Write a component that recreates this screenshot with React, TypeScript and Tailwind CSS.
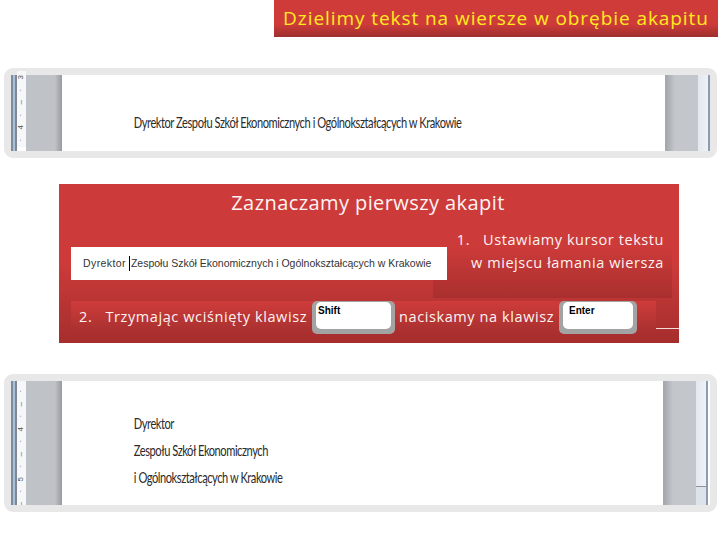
import type { ReactNode } from 'react';

const sans = "font-['Open_Sans',sans-serif]";
const doc = "font-['Lato',sans-serif] text-[#2b2b2b] origin-left scale-x-[0.74] whitespace-nowrap";

const RulerMarks = ({ marks, className }: { marks: string[]; className: string }) => (
  <div className={`flex h-full w-[9px] flex-col items-center overflow-hidden bg-[#f6f7f9] font-['Liberation_Sans',sans-serif] text-[8px] text-[#555] ${className}`}>
    {marks.map((m, i) => (
      <span key={i} className="flex h-[12.5px] shrink-0 -rotate-90 items-center leading-none">{m}</span>
    ))}
  </div>
);

const WordPanel = ({
  marks,
  className,
  rulerClass,
  trailing,
  scrollEnd,
  children,
}: {
  marks: string[];
  className: string;
  rulerClass: string;
  trailing: string;
  scrollEnd?: boolean;
  children: ReactNode;
}) => (
  <div className={`ml-1 flex w-[713px] rounded-[9px] border-[7px] border-[#e8e8e8] ${className}`}>
    <div className="flex w-[6px] shrink-0">
      <div className="w-[2px] bg-[#7f8c9c]" />
      <div className="w-[2px] bg-[#a9c0da]" />
      <div className="w-[2px] bg-[#7e8793]" />
    </div>
    <RulerMarks marks={marks} className={rulerClass} />
    <div className="w-[36px] shrink-0 bg-gradient-to-r from-[#bfc3c8] from-80% to-[#979ba1]" />
    <div className="min-w-0 flex-1 overflow-hidden bg-white">{children}</div>
    <div className="w-[33px] shrink-0 bg-gradient-to-r from-[#a6aaaf] from-5% via-[#c3c6ca] via-30% to-[#c3c6ca]" />
    <div className="flex w-[10px] shrink-0 flex-col bg-gradient-to-r from-[#e4e8ef] to-[#eef1f6]">
      {scrollEnd && <div className="mt-auto h-[19px] border-t border-[#8d939c] bg-[#dde3ea]" />}
    </div>
    <div className="w-[2px] shrink-0 bg-[#8d9bb0]" />
    <div className={`shrink-0 bg-white ${trailing}`} />
  </div>
);

const Key = ({ label, className, labelClass }: { label: string; className: string; labelClass: string }) => (
  <div className={`flex h-[33px] shrink-0 rounded-[5px] bg-[#a3a3a3] px-[4px] pb-[5px] pt-px ${className}`}>
    <div className={`flex-1 rounded-[5px] bg-white pt-[3px] font-['Liberation_Sans',sans-serif] text-[10px] font-bold leading-[12px] text-black ${labelClass}`}>
      {label}
    </div>
  </div>
);

const App = () => {
  return (
    <div className="flex h-[540px] w-[720px] flex-col overflow-hidden bg-white">
      <div className="ml-[274px] h-[37px] w-[444px] bg-gradient-to-b from-[#cf3b39] from-65% to-[#9c2f2e] text-center">
        <span className={`${sans} whitespace-nowrap text-[19px] leading-[37px] tracking-[0.93px] text-[#ffeb1e]`}>
          Dzielimy tekst na wiersze w obrębie akapitu
        </span>
      </div>

      <WordPanel
        marks={['3', '·', '–', '·', '4', '·']}
        rulerClass="-mt-[4px] h-[80px]"
        trailing="w-0"
        className="mt-[31px] h-[90px]"
      >
        <div className={`${doc} pl-[97px] pt-[36px] text-[15px] leading-[22px] tracking-[-0.6px]`}>
          Dyrektor Zespołu Szkół Ekonomicznych i Ogólnokształcących w Krakowie
        </div>
      </WordPanel>

      <div className="relative ml-[59px] mt-[26px] h-[159px] w-[620px] bg-gradient-to-b from-[#cc3b3a] from-50% to-[#a52e2d]">
        <div className={`${sans} pr-[2px] pt-[6px] text-center text-[20px] leading-[26px] tracking-[0.42px] text-[#fdf3f2]`}>
          Zaznaczamy pierwszy akapit
        </div>
        <div className="ml-[12px] mt-[31px] flex">
          <div className="relative z-10 flex h-[33px] w-[376px] shrink-0 items-center whitespace-nowrap bg-white pl-[12px] font-['Liberation_Sans',sans-serif] text-[10.5px] text-[#333]">
            <span className="tracking-[0.4px]">Dyrektor</span>
            <span className="ml-[3px] mr-px inline-block h-[15px] w-px bg-black" />
            Zespołu Szkół Ekonomicznych i Ogólnokształcących w Krakowie
          </div>
          <div className={`${sans} -mb-[18px] -ml-[14px] -mt-[22px] h-[73px] w-[239px] shrink-0 whitespace-nowrap bg-gradient-to-b from-[#cc3b3a] from-30% to-[#a92f2e] pr-[8px] pt-[3px] text-right text-[14.5px] leading-[23px] tracking-[0.57px] text-[#fdf3f2]`}>
            <div>1.&nbsp;&nbsp; Ustawiamy kursor tekstu</div>
            <div>w miejscu łamania wiersza</div>
          </div>
        </div>
        <div className={`${sans} relative ml-[12px] mt-[21px] flex h-[30px] w-[585px] bg-gradient-to-b from-[#cf3c3b] to-[#a93130] text-[14.5px] leading-[31px] text-[#fdf3f2]`}>
          <span className="ml-[8px] w-[233px] shrink-0 whitespace-nowrap tracking-[0.6px]">2.&nbsp;&nbsp; Trzymając wciśnięty klawisz</span>
          <Key label="Shift" className="w-[83px]" labelClass="pl-[2px]" />
          <span className="ml-[4px] w-[160px] shrink-0 whitespace-nowrap tracking-[0.6px]">naciskamy na klawisz</span>
          <Key label="Enter" className="w-[78px]" labelClass="pl-[6px]" />
        </div>
        <div className="absolute bottom-[14px] right-0 h-px w-[23px] bg-[#f3dcdc]" />
      </div>

      <WordPanel
        marks={['·', '–', '·', '4', '·', '–', '·', '5', '·', '–']}
        rulerClass="pt-[4px]"
        trailing="w-[2px]"
        scrollEnd
        className="mt-[31px] h-[138px]"
      >
        <div className={`${doc} pl-[97px] pt-[29px] text-[15px] leading-[27px] tracking-[-0.6px]`}>
          <div>Dyrektor</div>
          <div>Zespołu Szkół Ekonomicznych</div>
          <div>i Ogólnokształcących w Krakowie</div>
        </div>
      </WordPanel>
    </div>
  );
};

export default App;
